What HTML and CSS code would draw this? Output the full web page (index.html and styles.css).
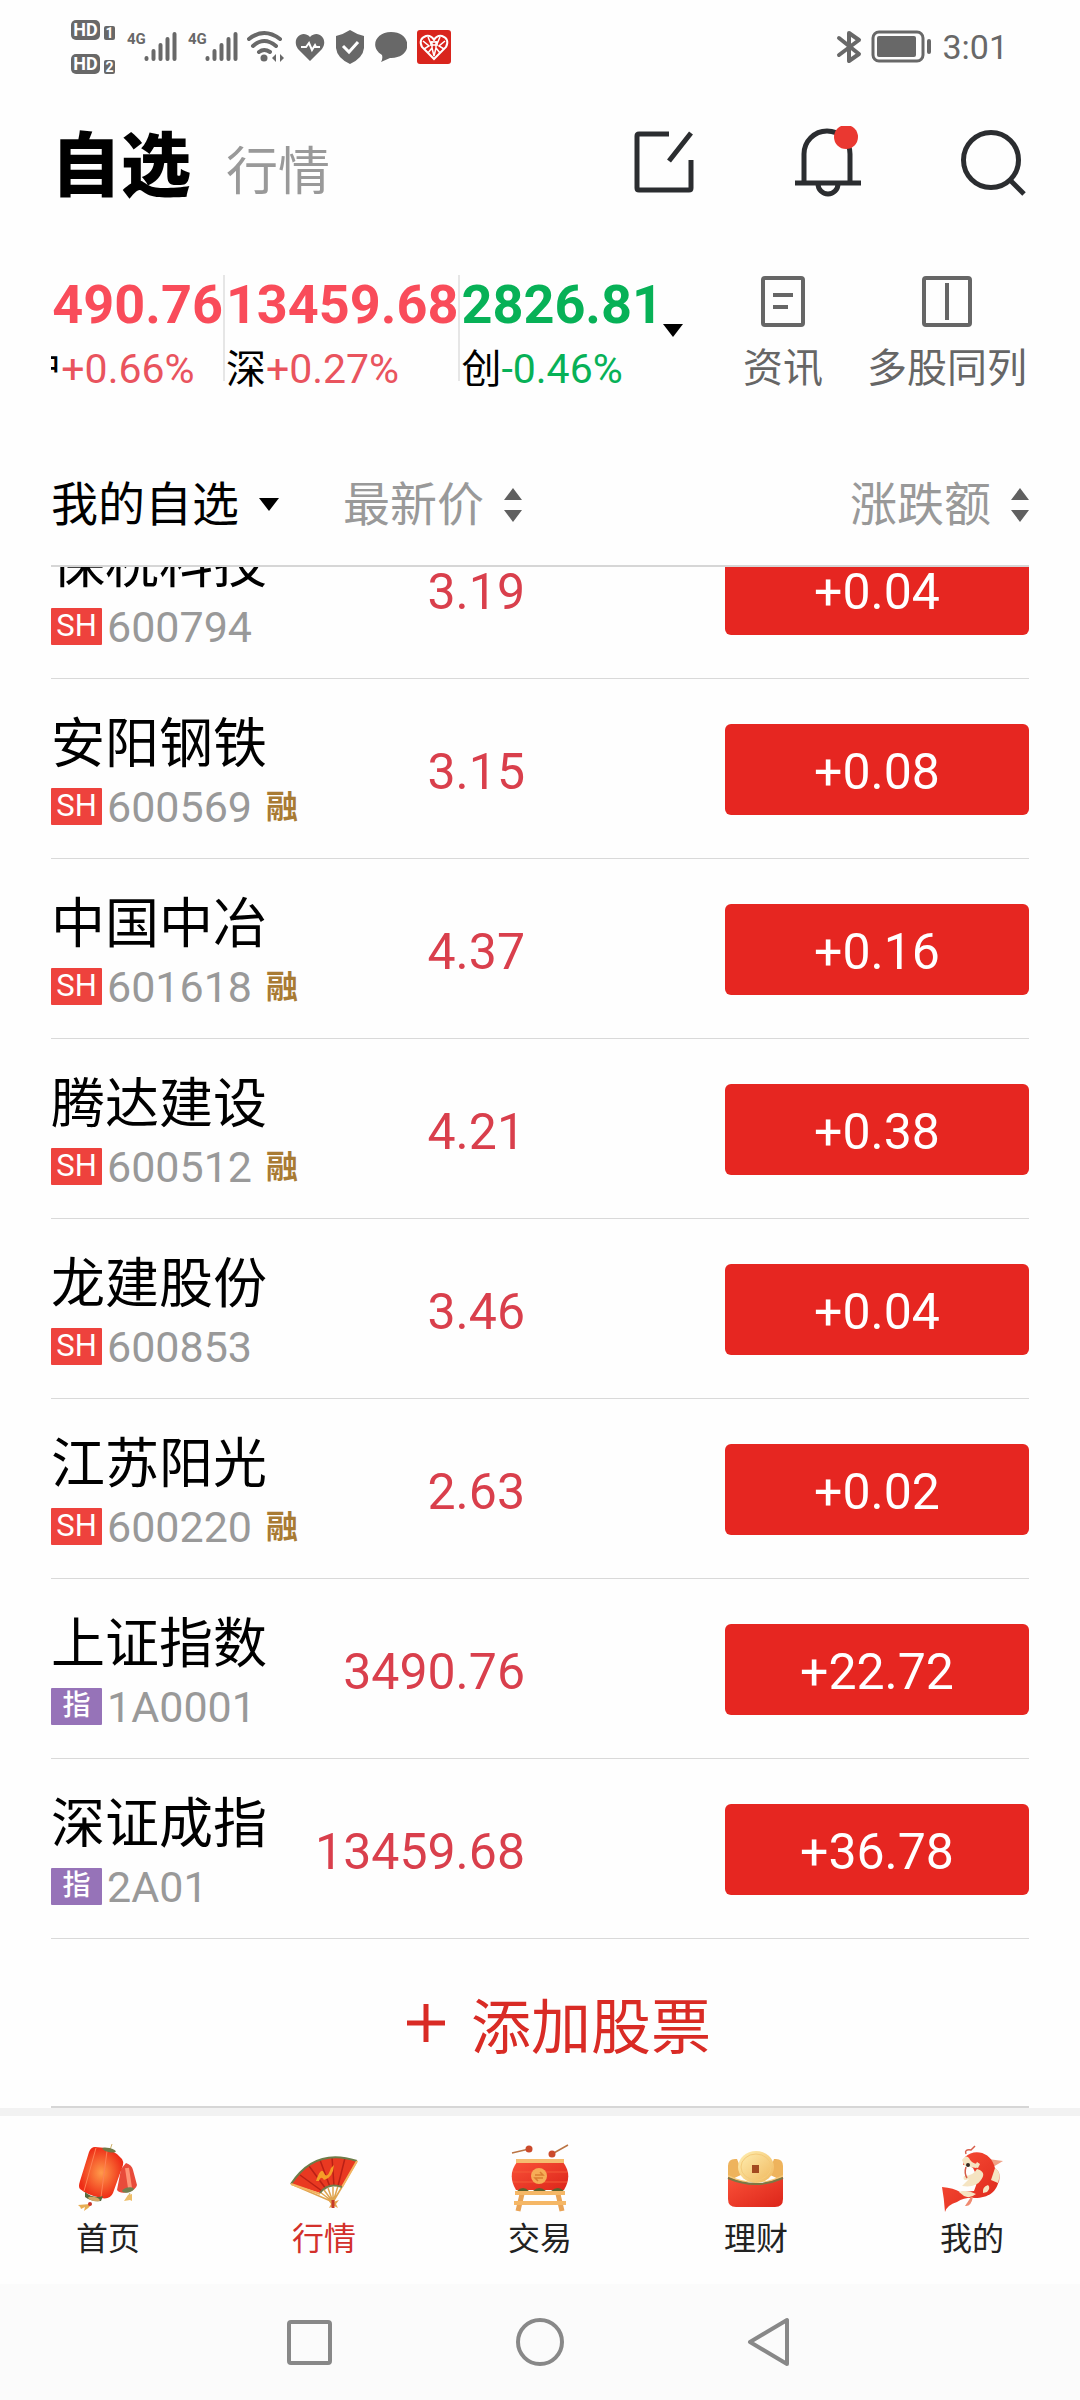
FILE: index.html
```html
<!DOCTYPE html>
<html lang="zh-CN">
<head>
    <meta charset="UTF-8">
    <meta name="viewport" content="width=device-width, initial-scale=1.0">
    <title>自选</title>
    <link rel="stylesheet" href="styles.css">
</head>
<body>
    <div class="status-bar">
        <div class="hd-group">
            <div class="hd"><span class="hd-tag">HD</span><span class="sim">1</span></div>
            <div class="hd"><span class="hd-tag">HD</span><span class="sim">2</span></div>
        </div>
        <div class="signal">
            <span class="net">4G</span>
            <svg width="33" height="32" viewBox="0 0 33 32" stroke="#686868" stroke-width="4" stroke-linecap="round"><path d="M2.5 27v1M9.500 20v8M16.500 14v14M23.500 8v20M30.500 3v25"/></svg>
        </div>
        <div class="signal">
            <span class="net">4G</span>
            <svg width="33" height="32" viewBox="0 0 33 32" stroke="#686868" stroke-width="4" stroke-linecap="round"><path d="M2.5 27v1M9.500 20v8M16.500 14v14M23.500 8v20M30.500 3v25"/></svg>
        </div>
        <div class="status-icons">
            <svg width="38" height="34" viewBox="0 0 38 34" fill="none" stroke="#686868" stroke-width="4" stroke-linecap="round"><path d="M2 9Q17-3 33 9M6 16Q17 6 29 16M12 22Q17 18 23 22"/><circle cx="17" cy="28" r="3.500" fill="#686868" stroke="none"/><path d="M29 24v8l-4-4zM33 24v8l4-4z" fill="#686868" stroke="none"/></svg>
            <svg width="30" height="34" viewBox="0 0 30 34"><path d="M15 31L3 19C-4 9 7-1 15 7C23-1 34 9 27 19z" fill="#686868"/><path d="M6 17h5l3-4 3 7 3-5 1 2h4" fill="none" stroke="#fff" stroke-width="2"/></svg>
            <svg width="30" height="34" viewBox="0 0 30 34"><path d="M15 0Q21 4 29 6V18Q28 28 15 34Q2 28 1 18V6Q9 4 15 0z" fill="#686868"/><path d="M8 16l6 6 9-10" fill="none" stroke="#fff" stroke-width="3"/></svg>
            <svg width="32" height="34" viewBox="0 0 32 34"><path d="M16 2C38 2 38 29 15 28L6 32Q8 29 7 25C-6 17 1 2 16 2z" fill="#686868"/></svg>
            <svg width="34" height="34" viewBox="0 0 34 34"><rect width="34" height="34" rx="3" fill="#d9251d"/><path d="M17 29L5 17Q1 9 9 6Q14 5 17 10Q20 5 25 6Q33 9 29 17z" fill="none" stroke="#fff" stroke-width="2"/><path d="M6 11l6 5-5 3M11 7l3 7M28 11l-6 5 5 3M23 7l-3 7M11 23l4-5 2 8 2-8 4 5M13 12h8M13 15h8M15 11v7M19 11v7" fill="none" stroke="#fff" stroke-width="1.500"/></svg>
        </div>
        <div class="status-right">
            <svg width="26" height="34" viewBox="0 0 26 34" fill="none" stroke="#686868" stroke-width="4" stroke-linejoin="round" stroke-linecap="round"><path d="M3 8l20 16-10 7V3l10 7L3 25"/></svg>
            <svg width="62" height="34" viewBox="0 0 62 34" fill="none" stroke="#686868"><rect x="2" y="2" width="50" height="29" rx="6" stroke-width="3"/><rect x="6" y="6" width="39" height="21" rx="2" fill="#686868" stroke="none"/><path d="M58 11v11" stroke-width="4" stroke-linecap="round"/></svg>
            <span class="clock">3:01</span>
        </div>
    </div>

    <header class="header">
        <h1>自选</h1>
        <a href="#" class="header-link">行情</a>
        <div class="header-actions">
            <button aria-label="编辑">
                <svg width="72" height="72" viewBox="0 0 72 72" fill="none" stroke="#2b2d30" stroke-width="5"><path d="M42 8H12Q10 8 10 10V62Q10 64 12 64H62Q64 64 64 62V34M64 7L42 35"/></svg>
            </button>
            <button aria-label="提醒">
                <svg width="72" height="72" viewBox="0 0 72 72" fill="none" stroke="#2b2d30" stroke-width="5"><path d="M12 58V28A23 23 0 0 1 58 28V58M3 57H69M26 58A10 10 0 0 0 46 58"/><circle cx="54" cy="11" r="12" fill="#ea3831" stroke="none"/></svg>
            </button>
            <button aria-label="搜索">
                <svg width="72" height="72" viewBox="0 0 72 72" fill="none" stroke="#2b2d30" stroke-width="5"><circle cx="34" cy="34" r="27.500"/><path d="M52 53L67 68"/></svg>
            </button>
        </div>
    </header>

    <section class="market">
        <div class="indices">
            <div class="index up"><b>3490.76</b><span><em>沪</em>+0.66%</span></div>
            <div class="index up"><b>13459.68</b><span><em>深</em>+0.27%</span></div>
            <div class="index down"><b>2826.81</b><span><em>创</em>-0.46%</span></div>
        </div>
        <span class="caret market-caret"></span>
        <button class="tool tool-news">
            <svg width="52" height="52" viewBox="0 0 52 52" fill="none" stroke="#666" stroke-width="4"><rect x="6" y="3" width="40" height="47" rx="2"/><path d="M16 20h20M16 32h15"/></svg>
            资讯
        </button>
        <button class="tool">
            <svg width="52" height="52" viewBox="0 0 52 52" fill="none" stroke="#666" stroke-width="4"><rect x="3" y="3" width="46" height="47" rx="2"/><path d="M26 8v37"/></svg>
            多股同列
        </button>
    </section>

    <div class="columns">
        <button class="group">我的自选<span class="caret"></span></button>
        <button class="sort sort-price">最新价<svg width="18" height="34" viewBox="0 0 18 34" fill="#606060"><path d="M9 0l9 12H0zM9 34l9-12H0z"/></svg></button>
        <button class="sort">涨跌额<svg width="18" height="34" viewBox="0 0 18 34" fill="#606060"><path d="M9 0l9 12H0zM9 34l9-12H0z"/></svg></button>
    </div>

    <main class="list">
        <table class="stocks">
            <tr>
                <td class="stock"><div class="name">保税科技</div><div class="code"><span class="tag">SH</span>600794</div></td>
                <td class="price">3.19</td>
                <td class="change"><button>+0.04</button></td>
            </tr>
            <tr>
                <td class="stock"><div class="name">安阳钢铁</div><div class="code"><span class="tag">SH</span>600569<span class="margin">融</span></div></td>
                <td class="price">3.15</td>
                <td class="change"><button>+0.08</button></td>
            </tr>
            <tr>
                <td class="stock"><div class="name">中国中冶</div><div class="code"><span class="tag">SH</span>601618<span class="margin">融</span></div></td>
                <td class="price">4.37</td>
                <td class="change"><button>+0.16</button></td>
            </tr>
            <tr>
                <td class="stock"><div class="name">腾达建设</div><div class="code"><span class="tag">SH</span>600512<span class="margin">融</span></div></td>
                <td class="price">4.21</td>
                <td class="change"><button>+0.38</button></td>
            </tr>
            <tr>
                <td class="stock"><div class="name">龙建股份</div><div class="code"><span class="tag">SH</span>600853</div></td>
                <td class="price">3.46</td>
                <td class="change"><button>+0.04</button></td>
            </tr>
            <tr>
                <td class="stock"><div class="name">江苏阳光</div><div class="code"><span class="tag">SH</span>600220<span class="margin">融</span></div></td>
                <td class="price">2.63</td>
                <td class="change"><button>+0.02</button></td>
            </tr>
            <tr>
                <td class="stock"><div class="name">上证指数</div><div class="code"><span class="tag tag-index">指</span>1A0001</div></td>
                <td class="price">3490.76</td>
                <td class="change"><button>+22.72</button></td>
            </tr>
            <tr>
                <td class="stock"><div class="name">深证成指</div><div class="code"><span class="tag tag-index">指</span>2A01</div></td>
                <td class="price">13459.68</td>
                <td class="change"><button>+36.78</button></td>
            </tr>
        </table>
        <button class="add">
            <svg width="38" height="38" viewBox="0 0 38 38" stroke="#d92b25" stroke-width="5"><path d="M0 19h38M19 0v38"/></svg>
            添加股票
        </button>
    </main>

    <nav class="tabs">
        <a href="#">
            <svg width="70" height="70" viewBox="0 0 70 70">
                <defs>
                    <radialGradient id="glow"><stop offset="0" stop-color="#ff9b4a"/><stop offset="1" stop-color="#ee2d17"/></radialGradient>
                    <linearGradient id="gold" x1="0" y1="0" x2="1" y2="1"><stop offset="0" stop-color="#fff0b4"/><stop offset="1" stop-color="#f0b75c"/></linearGradient>
                    <linearGradient id="red" x1="0" y1="0" x2="1" y2="1"><stop offset="0" stop-color="#fa5138"/><stop offset="1" stop-color="#dc251a"/></linearGradient>
                </defs>
                <path d="M53 19Q59 21 60 26L64 41Q63 46 55 48Q47 50 44 46L48 25z" fill="#e84b3a"/>
                <path d="M54 24l3 20" stroke="#ff9476" stroke-width="4"/>
                <ellipse cx="55" cy="46" rx="6" ry="2.500" transform="rotate(-12 55 46)" fill="#71804f"/>
                <path d="M39 0l-2 6M57 49l-2 4" stroke="#d1b16b"/>
                <path d="M55 51l-4 6 6-1 2 1V50z" fill="#edbd68"/>
                <path d="M22 3Q39 3 49 15Q51 18 50 21L40 49Q37 56 28 54Q14 51 7 45Q5 43 7 37L16 8Q18 3 22 3z" fill="url(#glow)"/>
                <path d="M23 4L11 47M34 7L28 53" stroke="#ff8055" fill="none"/>
                <ellipse cx="36" cy="6" rx="7" ry="2" transform="rotate(14 36 6)" fill="#717947"/>
                <path d="M12 48Q20 55 30 52L28 57Q18 58 12 53z" fill="#576a3c"/>
                <ellipse cx="21" cy="55" rx="6" ry="2" transform="rotate(12 21 55)" fill="#d4a763"/>
                <path d="M17 60L5 61Q8 63 8 65L12 63 11 67Q15 65 19 60z" fill="#e7ad54"/><circle cx="17" cy="60" r="2" fill="#c9372b"/>
            </svg>
            首页
        </a>
        <a href="#" class="active">
            <svg width="70" height="70" viewBox="0 0 70 70">
                <path d="M44 58L31 48M44 58L35 46M44 58L39 44M44 58L44 43M44 58L49 42M44 58L53 43M44 58L2 40M44 58L68 17" stroke="#dfa450" stroke-width="1.500"/>
                <path d="M2 40Q26 3 68 17L53 43Q39 38 31 49z" fill="#e93921"/>
                <path d="M11 31L33 47M20 22L37 45M31 16L41 43M43 13L45 42M56 14L49 42" stroke="#b92016" stroke-width="1.500"/>
                <path d="M2 40Q26 3 68 17" fill="none" stroke="#6d7c49" stroke-width="2"/>
                <path d="M2 40L31 50M68 17L53 43" stroke="#f3b461" stroke-width="2"/>
                <path d="M31 49Q39 38 53 43" fill="none" stroke="#737b49" stroke-width="2"/>
                <path d="M27 37Q32 22 35 29Q38 36 42 24L45 21Q44 34 35 36Q32 31 30 37z" fill="#f69d27"/>
                <path d="M39 56l5 2 6-2-3 4 2 4-4-2-5 2 2-4z" fill="#e6a34c"/><path d="M44 56v8" stroke="#c63a29" stroke-width="3"/>
            </svg>
            行情
        </a>
        <a href="#">
            <svg width="70" height="70" viewBox="0 0 70 70">
                <path d="M7 9L24 5M63 1L47 10" stroke="#bb7444" stroke-width="1.500"/><circle cx="24" cy="5" r="3.500" fill="#cb4a2b"/><circle cx="47" cy="10" r="3.500" fill="#cb4a2b"/>
                <path d="M17 50L13 67M53 50L57 67" stroke="#e9a356" stroke-width="5"/>
                <path d="M12 18H58Q68 31 59 46H11Q2 31 12 18z" fill="url(#red)"/>
                <path d="M8 28H62M8 38H62" stroke="#f45a38"/>
                <rect x="11" y="15" width="48" height="4" fill="#f6bd70"/>
                <path d="M12 47Q18 41 24 47zM28 47Q34 41 41 47zM46 47Q53 41 59 47z" fill="#5a632d"/>
                <rect x="10" y="47" width="50" height="4" fill="#f5b766"/><rect x="9" y="57" width="52" height="4" fill="#f5b766"/>
                <circle cx="34" cy="32" r="8" fill="#f6ad57"/><path d="M30 31h8l-3-3M38 34h-8l3 3" fill="none" stroke="#da7d32" stroke-width="1.500"/>
            </svg>
            交易
        </a>
        <a href="#">
            <svg width="70" height="70" viewBox="0 0 70 70">
                <path d="M7 37V22Q7 14 16 15L22 30zM62 37V22Q62 14 53 15L47 30z" fill="#eeb35c"/>
                <path d="M7 31Q35 45 62 31V38H7z" fill="#f5c978"/>
                <ellipse cx="35" cy="23" rx="18" ry="16" fill="url(#gold)"/><ellipse cx="35" cy="23" rx="15" ry="13" fill="none" stroke="#f4cb7a"/>
                <rect x="31" y="21" width="7" height="8" fill="#a34a20"/>
                <path d="M7 33Q35 46 62 33V55Q62 63 54 63H15Q7 63 7 55z" fill="url(#red)"/>
                <path d="M7 34Q35 46 62 34" fill="none" stroke="#7c7744" stroke-width="2"/>
            </svg>
            理财
        </a>
        <a href="#">
            <svg width="70" height="70" viewBox="0 0 70 70">
                <path d="M51 15L66 17 56 23zM58 24Q65 29 62 38L55 44z" fill="#f0a185"/>
                <path d="M28 13C37 4 53 8 57 21Q60 31 62 34C61 48 51 54 38 54Q28 53 20 58Q10 61 8 68Q7 54 5 43Q17 44 23 48L37 47Q43 35 36 24Q31 20 26 21z" fill="url(#red)"/>
                <path d="M25 16Q29 10 32 14Q34 19 40 20L39 24 28 22zM40 25Q50 28 44 36Q39 44 25 42L32 35Q25 38 27 32Q36 32 40 25zM22 48Q30 45 39 50Q33 55 27 52zM58 24Q65 29 61 39L54 36zM51 41Q54 44 50 48L46 49Q45 43 51 41zM40 18l3 2-2 4-4-1z" fill="#f5e4c2"/>
                <path d="M34 53L28 62Q34 63 36 53z" fill="#ef8a70"/>
                <path d="M29 10Q27 5 34 6L38 2M29 23Q27 29 30 34" fill="none" stroke="#d75d49" stroke-width="1.500"/>
                <circle cx="31" cy="21" r="2" fill="#33291f"/>
            </svg>
            我的
        </a>
    </nav>

    <div class="system-nav">
        <button aria-label="最近任务"><svg width="50" height="50" viewBox="0 0 50 50"><rect x="4" y="5" width="41" height="41" rx="2"/></svg></button>
        <button aria-label="主屏幕"><svg width="50" height="50" viewBox="0 0 50 50"><circle cx="25" cy="25" r="22"/></svg></button>
        <button aria-label="返回"><svg width="50" height="50" viewBox="0 0 50 50"><path d="M42 3V47L5 25z"/></svg></button>
    </div>
</body>
</html>
```

FILE: styles.css
```css
* {
    box-sizing: border-box;
}

body {
    margin: 0;
    height: 100vh;
    display: flex;
    flex-direction: column;
    font-family: Roboto, "Noto Sans CJK SC", sans-serif;
    background-color: #fefefe;
    color: #000;
}

button {
    margin: 0;
    padding: 0;
    border: none;
    background: none;
    font-family: inherit;
    color: inherit;
    cursor: pointer;
}

a {
    color: inherit;
    text-decoration: none;
}

svg {
    display: block;
    flex-shrink: 0;
}

.status-bar {
    flex-shrink: 0;
    display: flex;
    align-items: center;
    height: 94px;
    padding: 0 72px 0 71px;
    color: #686868;
}

.hd-group {
    display: flex;
    flex-direction: column;
    gap: 14px;
    margin-right: 12px;
}

.hd {
    display: flex;
    align-items: flex-end;
    gap: 4px;
}

.hd-tag,
.sim {
    border-radius: 5px;
    background-color: #686868;
    color: #fff;
    font-size: 18px;
    font-weight: bold;
    line-height: 20px;
    width: 29px;
    text-align: center;
}

.sim {
    width: 11px;
    border-radius: 2px;
    font-size: 14px;
    line-height: 14px;
}

.signal {
    display: flex;
    align-items: flex-start;
    margin-right: 11px;
}

.net {
    width: 17px;
    font-size: 15px;
    font-weight: bold;
    line-height: 16px;
}

.status-icons {
    display: flex;
    gap: 10px;
    margin-left: -2px;
}

.status-right {
    display: flex;
    align-items: center;
    gap: 9px;
    margin-left: auto;
}

.clock {
    font-size: 34px;
}

.header {
    flex-shrink: 0;
    display: flex;
    align-items: center;
    height: 136px;
    padding: 0 51px;
}

h1 {
    margin: 0;
    padding-top: 10px;
    font-size: 70px;
    font-weight: 900;
    line-height: 80px;
}

.header-link {
    margin-left: 35px;
    padding-top: 22px;
    font-size: 52px;
    line-height: 60px;
    color: #999;
}

.header-actions {
    display: flex;
    gap: 93px;
    margin-left: auto;
}

.market {
    flex-shrink: 0;
    display: flex;
    height: 180px;
    padding: 45px 53px 0 51px;
}

.indices {
    display: flex;
    flex: 1;
    justify-content: flex-end;
    min-width: 0;
    overflow: hidden;
}

.index {
    flex-shrink: 0;
    height: 106px;
    padding-left: 1px;
    border-left: 2px solid #e6e6e6;
}

.index b {
    display: block;
    font-size: 54px;
    line-height: 60px;
}

.index span {
    display: block;
    font-size: 41px;
    line-height: 68px;
}

.index em {
    font-style: normal;
    font-size: 40px;
    color: #000;
}

.up b {
    color: #f94c5a;
}

.up span {
    color: #e9545e;
}

.down {
    color: #07b157;
}

.caret {
    width: 20px;
    height: 13px;
    background-color: #000;
    clip-path: polygon(0 0, 100% 0, 50% 100%);
}

.market-caret {
    margin: 49px 60px 0 0;
}

.tool {
    display: flex;
    flex-direction: column;
    align-items: center;
    gap: 12px;
    height: 124px;
    font-size: 40px;
    line-height: 60px;
    color: #666;
}

.tool-news {
    margin-right: 44px;
}

.columns {
    flex-shrink: 0;
    display: flex;
    align-items: center;
    height: 157px;
    margin: 0 51px;
    padding-top: 34px;
    border-bottom: 2px solid #d6d6d6;
}

.columns button {
    display: flex;
    align-items: center;
    font-size: 47px;
    line-height: 60px;
}

.group {
    gap: 20px;
}

.columns .sort {
    gap: 20px;
    margin-left: auto;
    color: #999;
}

.columns .sort-price {
    margin-left: 64px;
}

/* the list stays scrolled to its last row */
.list {
    flex: 1;
    min-height: 0;
    display: flex;
    flex-direction: column;
    justify-content: flex-end;
    margin: 0 51px;
    overflow: hidden;
}

.stocks {
    flex-shrink: 0;
    width: 100%;
    border-collapse: separate;
    border-spacing: 0;
    table-layout: fixed;
}

.stocks td {
    height: 180px;
    padding: 0;
    border-bottom: 1px solid #d9d9d9;
}

.stocks .stock {
    width: 255px;
    padding-top: 12px;
}

.name {
    font-size: 54px;
    line-height: 64px;
}

.code {
    display: flex;
    align-items: center;
    font-size: 43px;
    line-height: 60px;
    color: #999;
}

.tag {
    width: 51px;
    height: 37px;
    margin-right: 5px;
    border-radius: 1px;
    background-color: #ee423d;
    color: #fff;
    font-size: 31px;
    line-height: 36px;
    text-align: center;
}

.tag-index {
    background-color: #9673b8;
    font-size: 28px;
    font-weight: 500;
}

.margin {
    margin-left: 14px;
    font-size: 32px;
    font-weight: bold;
    color: #a97b33;
}

.stocks .price {
    width: 219px;
    padding-top: 6px;
    text-align: right;
    font-size: 50px;
    color: #d93f4c;
}

.stocks .change {
    padding-top: 2px;
    text-align: right;
}

.change button {
    width: 304px;
    height: 91px;
    padding-top: 4px;
    border-radius: 6px;
    background-color: #e62621;
    color: #fff;
    font-size: 50px;
}

.add {
    flex-shrink: 0;
    display: flex;
    align-items: center;
    justify-content: center;
    gap: 26px;
    height: 169px;
    padding-left: 38px;
    border-bottom: 2px solid #d6d6d6;
    font-size: 60px;
    color: #d92b25;
}

.tabs {
    flex-shrink: 0;
    display: flex;
    height: 176px;
    border-top: 8px solid #f2f2f2;
}

.tabs a {
    flex: 1;
    display: flex;
    flex-direction: column;
    align-items: center;
    padding-top: 28px;
    font-size: 32px;
    line-height: 50px;
    color: #222;
}

.tabs .active {
    color: #d3302b;
}

.system-nav {
    flex-shrink: 0;
    display: flex;
    justify-content: center;
    align-items: center;
    gap: 180px;
    height: 116px;
    background-color: #fbfbfb;
}

.system-nav svg {
    fill: none;
    stroke: #888;
    stroke-width: 4;
    stroke-linejoin: round;
}
```
